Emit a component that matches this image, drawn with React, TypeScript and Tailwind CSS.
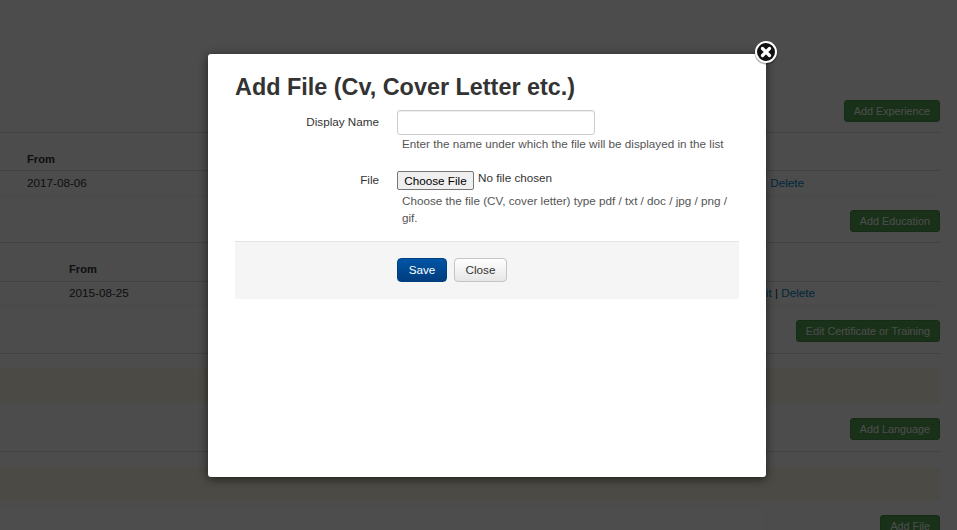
import React from "react";

const font = { fontFamily: '"Liberation Sans", Arial, sans-serif' };

function GreenButton({ children }: { children: React.ReactNode }) {
  return (
    <button className="h-[22px] px-[9px] rounded-[3px] border border-[#4a934a] bg-[#51a351] text-white text-[10.8px] leading-[20px]">
      {children}
    </button>
  );
}

function Page() {
  return (
    <div className="w-[940px] text-[11.7px] text-[#333333]">
      <div className="h-[133px] pt-[100px] flex justify-end border-b border-[#dddddd]">
        <GreenButton>Add Experience</GreenButton>
      </div>
      <div className="h-[38px] border-b border-[#dddddd] pl-[27px] pt-[19px] font-bold text-[11.2px] leading-[14px]">From</div>
      <div className="h-[25px] pb-[1px] flex items-center justify-between pl-[27px] pr-[136px] bg-[#fdfdfd] border-b border-[#f0f0f0]">
        <span>2017-08-06</span>
        <span className="text-[#0088cc]">Delete</span>
      </div>
      <div className="h-[47px] pt-[14px] flex justify-end border-b border-[#dddddd]">
        <GreenButton>Add Education</GreenButton>
      </div>
      <div className="h-[39px] border-b border-[#dddddd] pl-[69px] pt-[19px] font-bold text-[11.2px] leading-[14px]">From</div>
      <div className="h-[24px] pb-[2px] flex items-center justify-between pl-[69px] pr-[125px] bg-[#fdfdfd] border-b border-[#f0f0f0]">
        <span>2015-08-25</span>
        <span>
          <span className="text-[#0088cc]">Edit</span> | <span className="text-[#0088cc]">Delete</span>
        </span>
      </div>
      <div className="h-[48px] pt-[14px] flex justify-end border-b border-[#dddddd]">
        <GreenButton>Edit Certificate or Training</GreenButton>
      </div>
      <div className="h-[98px] pt-[15px] border-b border-[#dddddd]">
        <div className="h-[34px] bg-[#fcf8e3]" />
        <div className="mt-[15px] flex justify-end">
          <GreenButton>Add Language</GreenButton>
        </div>
      </div>
      <div className="pt-[15px]">
        <div className="h-[34px] bg-[#fcf8e3]" />
        <div className="mt-[14px] flex justify-end">
          <GreenButton>Add File</GreenButton>
        </div>
      </div>
    </div>
  );
}

function CloseIcon() {
  return (
    <svg width="26" height="26" viewBox="0 0 26 26" className="absolute left-[545px] top-[-15px]">
      <circle cx="13" cy="14" r="11.5" fill="#000000" fillOpacity="0.3" />
      <circle cx="13" cy="13" r="10" fill="#111111" stroke="#ffffff" strokeWidth="2" />
      <path d="M9.5 9.5 16.5 16.5M16.5 9.5 9.5 16.5" stroke="#ffffff" strokeWidth="3.2" strokeLinecap="round" />
    </svg>
  );
}

function Modal() {
  return (
    <div className="absolute left-[208px] top-[54px] w-[558px] h-[423px] bg-white rounded-[3px] shadow-[0_2px_10px_rgba(0,0,0,0.6)] pt-[18px] px-[27px] text-[11.7px] text-[#333333]">
      <CloseIcon />
      <h1 className="text-[23.4px] leading-[30px] font-bold text-[#333333]">Add File (Cv, Cover Letter etc.)</h1>
      <div className="mt-[8px] flex">
        <label className="w-[144px] text-right pt-[3px] leading-[18px]">Display Name</label>
        <div className="ml-[18px]">
          <input className="block w-[198px] h-[25px] bg-white border border-[#cccccc] rounded-[3px] shadow-[inset_0_1px_1px_rgba(0,0,0,0.075)]" />
          <p className="mt-[1px] pl-[5px] leading-[16px] text-[#555555]">Enter the name under which the file will be displayed in the list</p>
        </div>
      </div>
      <div className="mt-[19px] flex">
        <label className="w-[144px] text-right leading-[18px]">File</label>
        <div className="ml-[18px] w-[342px]">
          <div className="flex items-start h-[20px]">
            <span className="h-[19px] w-[77px] flex items-center justify-center bg-[#efefef] border border-[#767676] rounded-[2px] text-black">Choose File</span>
            <span className="ml-[4px] leading-[13px] text-[#333333]">No file chosen</span>
          </div>
          <p className="mt-[1px] pl-[5px] leading-[17px] text-[#555555]">Choose the file (CV, cover letter) type pdf / txt / doc / jpg / png / gif.</p>
        </div>
      </div>
      <div className="mt-[15px] h-[58px] w-[504px] bg-[#f5f5f5] border-t border-[#e5e5e5] pl-[162px] pt-[16px] flex items-start gap-[7px]">
        <button className="h-[24px] w-[50px] rounded-[4px] border border-[#003f81] bg-gradient-to-b from-[#0055a5] to-[#003d7f] text-white">Save</button>
        <button className="h-[24px] w-[53px] rounded-[4px] border border-[#c5c5c5] bg-gradient-to-b from-white to-[#e6e6e6] text-[#333333]">Close</button>
      </div>
    </div>
  );
}

export default function App() {
  return (
    <div className="relative w-[957px] h-[530px] overflow-hidden bg-white" style={font}>
      <Page />
      <div className="absolute inset-0 bg-black/70" />
      <Modal />
    </div>
  );
}
